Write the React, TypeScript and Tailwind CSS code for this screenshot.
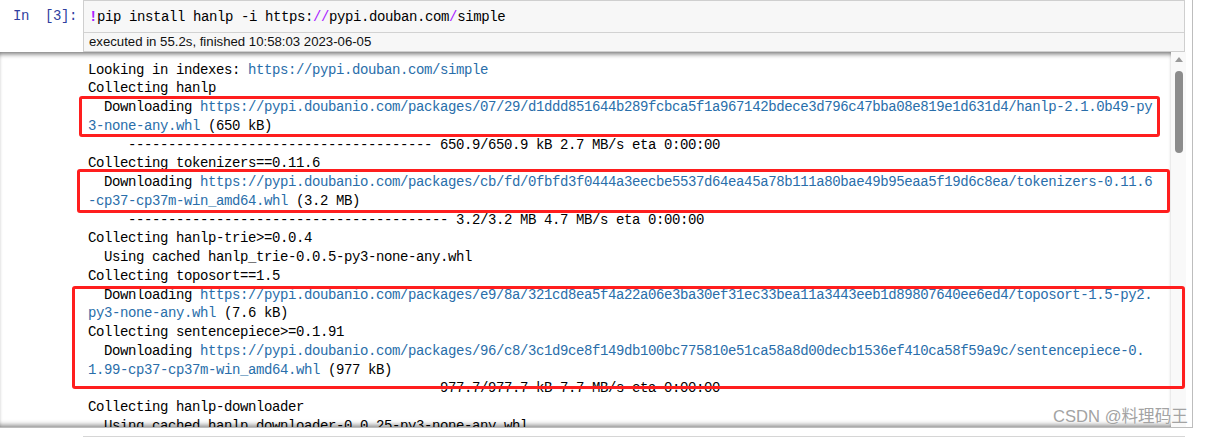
type Line = [string, string?, string?];

const lines: Line[] = [
	["Looking in indexes: ", "https://pypi.douban.com/simple"],
	["Collecting hanlp"],
	[
		"  Downloading ",
		"https://pypi.doubanio.com/packages/07/29/d1ddd851644b289fcbca5f1a967142bdece3d796c47bba08e819e1d631d4/hanlp-2.1.0b49-py",
	],
	["", "3-none-any.whl", " (650 kB)"],
	["     -------------------------------------- 650.9/650.9 kB 2.7 MB/s eta 0:00:00"],
	["Collecting tokenizers==0.11.6"],
	[
		"  Downloading ",
		"https://pypi.doubanio.com/packages/cb/fd/0fbfd3f0444a3eecbe5537d64ea45a78b111a80bae49b95eaa5f19d6c8ea/tokenizers-0.11.6",
	],
	["", "-cp37-cp37m-win_amd64.whl", " (3.2 MB)"],
	["     ---------------------------------------- 3.2/3.2 MB 4.7 MB/s eta 0:00:00"],
	["Collecting hanlp-trie>=0.0.4"],
	["  Using cached hanlp_trie-0.0.5-py3-none-any.whl"],
	["Collecting toposort==1.5"],
	[
		"  Downloading ",
		"https://pypi.doubanio.com/packages/e9/8a/321cd8ea5f4a22a06e3ba30ef31ec33bea11a3443eeb1d89807640ee6ed4/toposort-1.5-py2.",
	],
	["", "py3-none-any.whl", " (7.6 kB)"],
	["Collecting sentencepiece>=0.1.91"],
	[
		"  Downloading ",
		"https://pypi.doubanio.com/packages/96/c8/3c1d9ce8f149db100bc775810e51ca58a8d00decb1536ef410ca58f59a9c/sentencepiece-0.",
	],
	["", "1.99-cp37-cp37m-win_amd64.whl", " (977 kB)"],
	["     -------------------------------------- 977.7/977.7 kB 7.7 MB/s eta 0:00:00"],
	["Collecting hanlp-downloader"],
	["  Using cached hanlp_downloader-0.0.25-py3-none-any.whl"],
];

// red annotation boxes drawn over the output
const marks = [
	"left-[79px] top-[96px] w-[1081px] h-[41px]",
	"left-[77px] top-[169px] w-[1093px] h-[44px]",
	"left-[72px] top-[286px] w-[1113px] h-[103px]",
];

function Output() {
	return (
		<div className="flex h-[375px]">
			<div className="flex w-[1171px] overflow-hidden shadow-[inset_0_5px_5px_-3px_rgba(0,0,0,0.55),inset_0_-5px_5px_-3px_rgba(0,0,0,0.45)]">
				<div className="w-[83px] shrink-0" />
				<div className="relative -z-10 whitespace-pre pl-[5px] pt-[8.5px] text-[14px] leading-[18.75px] tracking-[-0.4px] text-black">
					{lines.map(([a, link, b], i) => (
						<div key={i}>
							{a}
							{link ? <span className="text-[#296eaa]">{link}</span> : null}
							{b}
						</div>
					))}
				</div>
			</div>
			<div className="flex w-[15px] flex-col items-center bg-[#f9f9f9] pt-[5px]">
				<svg width="8" height="5" viewBox="0 0 8 5" className="ml-[1px]">
					<path d="M0 5 L4 0 L8 5 Z" fill="#9a9a9a" />
				</svg>
				<div className="mt-[9px] h-[82px] w-[8px] rounded-full bg-[#8c8c8c]" />
			</div>
		</div>
	);
}

export default function App() {
	return (
		<div
			className="relative isolate h-[437px] w-[1205px] overflow-hidden bg-white"
			style={{ fontFamily: '"Liberation Mono", "DejaVu Sans Mono", monospace' }}
		>
			<div className="w-[1193px] border-r border-b border-[#bdbdbd]">
				<div className="flex">
					<div className="w-[83px] shrink-0 pt-[6px] pr-[6px] text-right text-[14px] leading-[20px] tracking-[-0.4px] whitespace-pre text-[#303f9f]">
						{"In  [3]:"}
					</div>
					<div className="mr-[7px] flex-1 border border-[#cfcfcf] bg-[#f7f7f7]">
						<div className="h-[31px] whitespace-pre pl-[5px] pt-[6px] text-[14px] leading-[20px] tracking-[-0.4px] text-black">
							<span className="font-bold text-[#aa22ff]">!</span>
							{"pip install hanlp -i https:"}
							<span className="text-[#aa22ff]">//</span>
							{"pypi.douban.com"}
							<span className="text-[#aa22ff]">/</span>
							{"simple"}
						</div>
						<div
							className="h-[19px] border-t border-[#d2d2d2] pl-[5px] text-[13.2px] leading-[18px] text-[#111]"
							style={{ fontFamily: '"Liberation Sans", Arial, sans-serif' }}
						>
							executed in 55.2s, finished 10:58:03 2023-06-05
						</div>
					</div>
				</div>
				<Output />
			</div>
			<div className="mt-[8px] ml-[83px] h-[10px] w-[1102px] border-t border-[#d6d6d6] bg-[#f7f7f7]" />

			{marks.map((m, i) => (
				<div key={i} className={`absolute rounded-[3px] border-[3px] border-[#ff1e1e] ${m}`} />
			))}

			<div
				className="absolute left-[1053px] top-[407px] text-[16.6px] leading-[20px] text-[#a3a3a3] [text-shadow:0_0_1px_#fff]"
				style={{ fontFamily: '"Liberation Sans", "Noto Sans CJK SC", sans-serif' }}
			>
				CSDN @料理码王
			</div>
		</div>
	);
}
